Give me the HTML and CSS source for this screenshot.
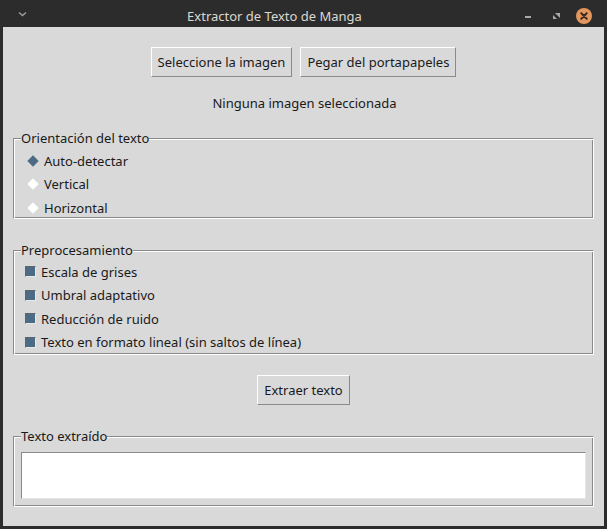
FILE: index.html
```html
<!DOCTYPE html>
<html>
<head>
<meta charset="utf-8">
<link rel="stylesheet" href="styles.css">
</head>
<body>
<div class="titlebar">
  <svg class="tb-menu" width="9" height="6" viewBox="0 0 9 6"><path d="M1 1.5 L4.5 4.5 L8 1.5" fill="none" stroke="#9a9a9a" stroke-width="1.6"/></svg>
  <div class="tb-title">Extractor de Texto de Manga</div>
  <div class="tb-controls">
    <svg class="tb-min" width="10" height="10" viewBox="0 0 10 10"><rect x="2" y="5" width="6" height="2" fill="#a8a8a8"/></svg>
    <svg class="tb-max" width="10" height="10" viewBox="0 0 10 10"><path d="M4 2 L9 2 L9 7 Z" fill="#a8a8a8"/><path d="M2 4 L2 8 L6 8 Z" fill="#a8a8a8"/></svg>
    <svg class="tb-close" width="16" height="16" viewBox="0 0 16 16"><circle cx="8" cy="8" r="8" fill="#e3965d"/><path d="M5.3 5.3 L10.7 10.7 M10.7 5.3 L5.3 10.7" stroke="#3a2a20" stroke-width="2" stroke-linecap="round"/></svg>
  </div>
</div>
<div class="window">
  <div class="btnrow">
    <button class="tkbtn">Seleccione la imagen</button>
    <button class="tkbtn">Pegar del portapapeles</button>
  </div>
  <div class="status">Ninguna imagen seleccionada</div>

  <fieldset class="group g1">
    <legend>Orientación del texto</legend>
    <div class="opt"><span class="diamond on"></span>Auto-detectar</div>
    <div class="opt"><span class="diamond"></span>Vertical</div>
    <div class="opt"><span class="diamond"></span>Horizontal</div>
  </fieldset>

  <fieldset class="group g2">
    <legend>Preprocesamiento</legend>
    <div class="chk"><span class="box"></span>Escala de grises</div>
    <div class="chk"><span class="box"></span>Umbral adaptativo</div>
    <div class="chk"><span class="box"></span>Reducción de ruido</div>
    <div class="chk"><span class="box"></span>Texto en formato lineal (sin saltos de línea)</div>
  </fieldset>

  <div class="btnrow2">
    <button class="tkbtn">Extraer texto</button>
  </div>

  <fieldset class="group g3">
    <legend>Texto extraído</legend>
    <div class="textarea"></div>
  </fieldset>
</div>
</body>
</html>
```
FILE: styles.css
```css
html, body {
  margin: 0;
  padding: 0;
}
body {
  width: 607px;
  height: 529px;
  background: #2c2c2c;
  font-family: "Noto Sans", "Open Sans", sans-serif;
  font-size: 13px;
  color: #1a1a1a;
  overflow: hidden;
}
.titlebar {
  height: 27px;
  display: flex;
  align-items: center;
  position: relative;
  background: #2c2c2c;
}
.tb-menu {
  margin-left: 18px;
  margin-top: 1px;
}
.tb-title {
  position: absolute;
  left: 0;
  right: 58px;
  top: 0;
  text-align: center;
  line-height: 32px;
  color: #dcd8d0;
  font-size: 13px;
}
.tb-controls {
  margin-left: auto;
  margin-right: 15px;
  display: flex;
  align-items: center;
  margin-top: 4px;
}
.tb-min {
  margin-right: 18px;
}
.tb-max {
  margin-right: 15px;
}
.window {
  margin: 0 3px;
  height: 499px;
  background: #d9d9d9;
  display: flex;
  flex-direction: column;
}
.btnrow {
  margin-top: 20px;
  display: flex;
  justify-content: center;
  gap: 8px;
}
.tkbtn {
  font-family: "Noto Sans", "Open Sans", sans-serif;
  font-size: 13px;
  color: #1a1a1a;
  background: #d9d9d9;
  height: 30px;
  padding: 0 6px;
  border: 1px solid;
  border-color: #ffffff #8a8a8a #8a8a8a #ffffff;
  margin: 0;
}
.status {
  text-align: center;
  margin-top: 17px;
  line-height: 18px;
  padding-left: 2px;
}
.group {
  box-sizing: border-box;
  margin: 0 10px;
  padding: 0 0 0 7px;
  border: 1px solid;
  border-color: #8a8a8a #ffffff #ffffff #8a8a8a;
  box-shadow: inset 1px 1px 0 #ffffff, inset -1px -1px 0 #8a8a8a;
  min-width: 0;
}
.group legend {
  padding: 0;
  margin-left: 0;
  line-height: 16px;
  height: 16px;
  background: #d9d9d9;
}
.g1 {
  margin-top: 18px;
  height: 89px;
}
.g2 {
  margin-top: 23px;
  height: 113px;
}
.g3 {
  margin-top: 23px;
  height: 79px;
}
.opt, .chk {
  display: flex;
  align-items: center;
  height: 23.5px;
  flex: none;
}
.g1 .opt:first-of-type {
  margin-top: 3px;
}
.g2 .chk:first-of-type {
  margin-top: 2px;
}
.diamond {
  width: 8px;
  height: 8px;
  transform: rotate(45deg);
  background: #ffffff;
  margin: 0 7px 0 8px;
}
.diamond.on {
  background: #4d6a85;
}
.box {
  width: 9px;
  height: 9px;
  background: #4d6a85;
  border: 1px solid;
  border-color: #5b6673 #e8e8e8 #e8e8e8 #5b6673;
  margin: 0 5px 0 4px;
}
.btnrow2 {
  margin-top: 20px;
  display: flex;
  justify-content: center;
}
.textarea {
  box-sizing: border-box;
  margin: 8px 7px 0 0;
  height: 47px;
  background: #ffffff;
  border: 1px solid;
  border-color: #8a8a8a #e6e6e6 #e6e6e6 #8a8a8a;
}
```
